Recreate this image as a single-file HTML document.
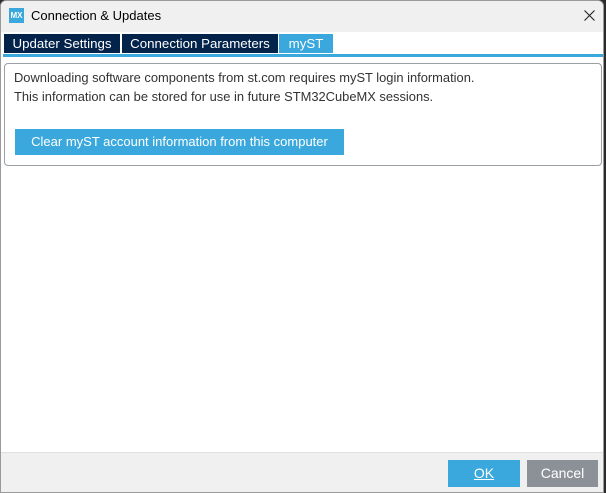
<!DOCTYPE html><html><head><style>
body{margin:0;width:606px;height:493px;background:#2b2b2b;font-family:"Liberation Sans",sans-serif;position:relative;overflow:hidden}
.win{position:absolute;left:0;top:0;width:604px;height:493px;background:#fff;border-radius:6px 6px 0 0;border:1px solid #9a9a9a;box-sizing:border-box;overflow:hidden}
.title{position:absolute;left:0;top:0;width:602px;height:31px;background:#f0f0f0}
.logo{position:absolute;left:8px;top:7px;width:15px;height:15px;background:#3aa8dc;color:#fff;font-size:8px;font-weight:bold;text-align:center;line-height:15px}
.tt{position:absolute;left:30px;top:7px;font-size:13px;color:#000}
.x{position:absolute;left:583px;top:9px}
.tab{position:absolute;top:33px;height:19px;font-size:13.3px;color:#fff;line-height:19px;text-align:center}
.line{position:absolute;left:2px;top:53px;width:600px;height:3px;background:#3aa8dc}
.box{position:absolute;left:3px;top:62px;width:598px;height:103px;border:1px solid #9aa0a6;border-radius:4px;box-sizing:border-box}
.t{position:absolute;left:13px;font-size:12.9px;color:#333}
.btn{position:absolute;left:14px;top:128px;width:329px;height:26px;background:#3aa8dc;color:#fff;font-size:13px;line-height:26px;text-align:center}
.foot{position:absolute;left:0;top:451px;width:602px;height:41px;background:#f0f0f0;border-top:1px solid #e0e0e0}
.ok{position:absolute;left:447px;top:459px;width:72px;height:27px;background:#3aa8dc;color:#fff;font-size:14px;line-height:27px;text-align:center}
.cn{position:absolute;left:526px;top:459px;width:71px;height:27px;background:#8c9198;color:#fff;font-size:14px;line-height:27px;text-align:center}
</style></head><body><div class="win">
<div class="title"><div class="logo">MX</div><div class="tt">Connection &amp; Updates</div>
<svg class="x" width="11" height="11" viewBox="0 0 11 11"><path d="M0.5 0.5L10.5 10.5M10.5 0.5L0.5 10.5" stroke="#222" stroke-width="1.1"/></svg></div>
<div class="tab" style="left:3px;width:116px;background:#03234b">Updater Settings</div>
<div class="tab" style="left:121px;width:156px;background:#03234b">Connection Parameters</div>
<div class="tab" style="left:278px;width:54px;background:#3aa8dc">myST</div>
<div class="line"></div>
<div class="box"></div>
<div class="t" style="top:69px">Downloading software components from st.com requires myST login information.</div>
<div class="t" style="top:88px">This information can be stored for use in future STM32CubeMX sessions.</div>
<div class="btn">Clear myST account information from this computer</div>
<div class="foot"></div>
<div class="ok"><u>OK</u></div><div class="cn">Cancel</div>
</div></body></html>
